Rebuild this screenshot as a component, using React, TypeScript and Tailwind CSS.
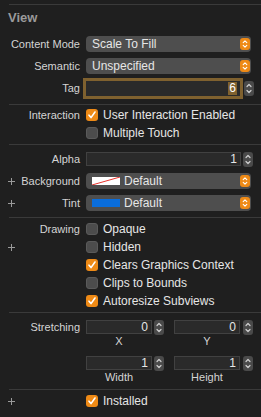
import React from 'react';

const Plus = () => (
  <svg width="7" height="7" viewBox="0 0 7 7" className="ml-[8px] shrink-0">
    <path d="M3.5 0V7M0 3.5H7" stroke="#9a9a9a" strokeWidth="1" />
  </svg>
);

const Separator = ({ className = '' }: { className?: string }) => (
  <div className={`ml-[9px] h-px bg-[#3a3a3a] ${className}`} />
);

const Row = ({
  label,
  plus,
  h = 'h-[18px]',
  className = '',
  children,
}: {
  label?: string;
  plus?: boolean;
  h?: string;
  className?: string;
  children?: React.ReactNode;
}) => (
  <div className={`flex items-center ${h} ${className}`}>
    <div className="w-[80px] shrink-0 flex items-center">
      {plus && <Plus />}
      <span className="ml-auto text-[11px] leading-none text-[#d4d4d4]">{label}</span>
    </div>
    <div className="ml-[6px] flex items-center">{children}</div>
  </div>
);

const Chevrons = ({ color }: { color: string }) => (
  <svg width="10" height="15" viewBox="0 0 10 15">
    <path d="M3 5.5L5 3.5L7 5.5" fill="none" stroke={color} strokeWidth="1.2" strokeLinecap="round" strokeLinejoin="round" />
    <path d="M3 9.5L5 11.5L7 9.5" fill="none" stroke={color} strokeWidth="1.2" strokeLinecap="round" strokeLinejoin="round" />
  </svg>
);

const OrangeStepper = () => (
  <div className="ml-auto w-[10px] h-[12px] rounded-[3px] bg-[#ee8a16] flex items-center justify-center">
    <svg width="10" height="12" viewBox="0 0 10 12">
      <path d="M3.2 4.6L5 2.8L6.8 4.6" fill="none" stroke="#fff" strokeWidth="1.1" strokeLinecap="round" strokeLinejoin="round" />
      <path d="M3.2 7.4L5 9.2L6.8 7.4" fill="none" stroke="#fff" strokeWidth="1.1" strokeLinecap="round" strokeLinejoin="round" />
    </svg>
  </div>
);

const Popup = ({ children }: { children: React.ReactNode }) => (
  <div className="w-[165px] h-[16px] rounded-[4px] bg-[#4e4e4e] flex items-center pl-[6px] pr-[1px]">
    <div className="flex items-center text-[12px] leading-none text-[#e6e6e6]">{children}</div>
    <OrangeStepper />
  </div>
);

const Stepper = ({ className = '' }: { className?: string }) => (
  <div className={`w-[10px] h-[15px] rounded-[3px] bg-[#4a4a4a] ${className}`}>
    <Chevrons color="#cfcfcf" />
  </div>
);

const Field = ({ value, width }: { value: string; width: string }) => (
  <div
    className={`${width} h-[14px] bg-[#2a2a2a] border border-[#414141] flex items-center justify-end pr-[3px] text-[12px] leading-none text-[#e6e6e6]`}
  >
    {value}
  </div>
);

const Checkbox = ({ checked, label }: { checked?: boolean; label: string }) => (
  <div className="flex items-center">
    {checked ? (
      <div className="w-[12px] h-[12px] rounded-[3px] bg-[#ee8a16] flex items-center justify-center">
        <svg width="10" height="10" viewBox="0 0 10 10">
          <path d="M2 5.2L4 7.6L8 2" fill="none" stroke="#fff" strokeWidth="1.6" strokeLinecap="round" strokeLinejoin="round" />
        </svg>
      </div>
    ) : (
      <div className="w-[12px] h-[12px] rounded-[3px] bg-[#4c4c4c] border border-[#5a5a5a]" />
    )}
    <span className="ml-[5px] text-[12px] leading-none text-[#e6e6e6]">{label}</span>
  </div>
);

const SubLabel = ({ text, width }: { text: string; width: string }) => (
  <div className={`${width} text-center text-[11px] leading-none text-[#d4d4d4]`}>{text}</div>
);

export default function App() {
  return (
    <div className="w-[261px] h-[417px] bg-[#1f1f1f] overflow-hidden font-['Liberation_Sans',Arial,sans-serif] flex flex-col">
      <div className="h-[4px] shrink-0" />
      <Separator />
      <div className="h-[25px] shrink-0 flex items-center pl-[8px] text-[13px] font-bold text-[#9a9a9a]">View</div>

      <Row label="Content Mode" h="h-[16px]" className="mt-[6px]">
        <Popup>Scale To Fill</Popup>
      </Row>
      <Row label="Semantic" h="h-[16px]" className="mt-[6px]">
        <Popup>Unspecified</Popup>
      </Row>
      <Row label="Tag" h="h-[21px]" className="mt-[4px]">
        <div className="w-[154px] h-[15px] bg-[#2a2a2a] ring-[3px] ring-[#7f612f] flex items-center justify-end pr-[3px]">
          <span className="bg-[#7f612f] text-white text-[12px] leading-[13px] px-px">6</span>
        </div>
        <Stepper className="ml-[4px]" />
      </Row>
      <Separator className="mt-[5px]" />

      <Row label="Interaction" className="mt-[1px]">
        <Checkbox checked label="User Interaction Enabled" />
      </Row>
      <Row>
        <Checkbox label="Multiple Touch" />
      </Row>
      <Separator className="mt-[2px]" />

      <Row label="Alpha" className="mt-[5px]">
        <Field value="1" width="w-[155px]" />
        <Stepper className="ml-[2px]" />
      </Row>
      <Row label="Background" plus className="mt-[4px]">
        <Popup>
          <svg width="28" height="8" viewBox="0 0 28 8" className="mr-[4px]">
            <rect width="28" height="8" fill="#ffffff" />
            <path d="M0 8L28 0" stroke="#e8332c" strokeWidth="1" />
          </svg>
          Default
        </Popup>
      </Row>
      <Row label="Tint" plus className="mt-[4px]">
        <Popup>
          <div className="w-[28px] h-[8px] bg-[#0a6ddb] mr-[4px]" />
          Default
        </Popup>
      </Row>
      <Separator className="mt-[5px]" />

      <div className="mt-[2px]">
        <Row label="Drawing">
          <Checkbox label="Opaque" />
        </Row>
        <Row plus>
          <Checkbox label="Hidden" />
        </Row>
        <Row>
          <Checkbox checked label="Clears Graphics Context" />
        </Row>
        <Row>
          <Checkbox label="Clips to Bounds" />
        </Row>
        <Row>
          <Checkbox checked label="Autoresize Subviews" />
        </Row>
      </div>
      <Separator className="mt-[2px]" />

      <Row label="Stretching" h="h-[14px]" className="mt-[7px]">
        <Field value="0" width="w-[66px]" />
        <Stepper className="ml-[2px]" />
        <div className="ml-[10px]">
          <Field value="0" width="w-[66px]" />
        </div>
        <Stepper className="ml-[3px]" />
      </Row>
      <Row h="h-[14px]">
        <SubLabel text="X" width="w-[66px]" />
        <div className="w-[22px]" />
        <SubLabel text="Y" width="w-[66px]" />
      </Row>
      <Row h="h-[14px]" className="mt-[8px]">
        <Field value="1" width="w-[66px]" />
        <Stepper className="ml-[2px]" />
        <div className="ml-[10px]">
          <Field value="1" width="w-[66px]" />
        </div>
        <Stepper className="ml-[3px]" />
      </Row>
      <Row h="h-[14px]">
        <SubLabel text="Width" width="w-[66px]" />
        <div className="w-[22px]" />
        <SubLabel text="Height" width="w-[66px]" />
      </Row>
      <Separator className="mt-[5px]" />

      <Row plus className="mt-[2px]">
        <Checkbox checked label="Installed" />
      </Row>
    </div>
  );
}
